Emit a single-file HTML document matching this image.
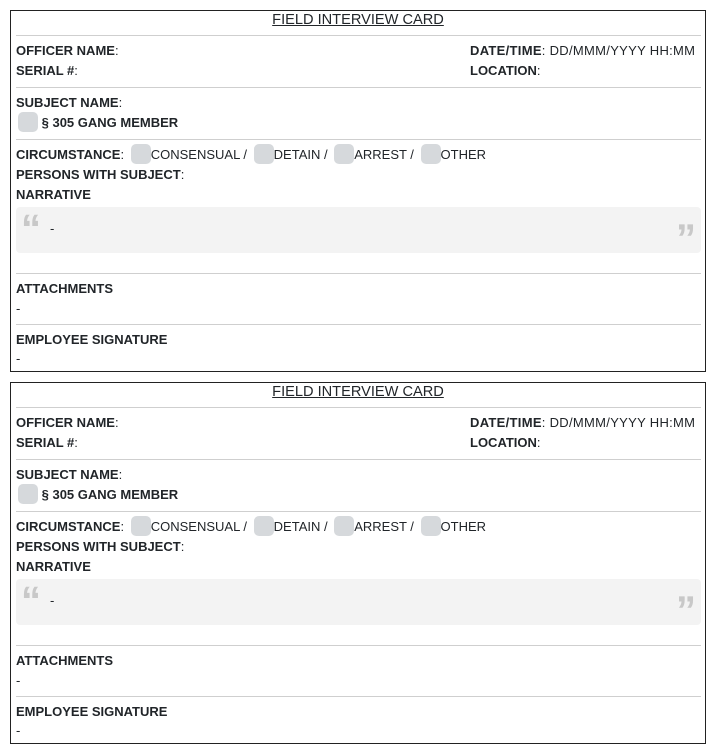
<!DOCTYPE html>
<html><head><style>
*{margin:0;padding:0;box-sizing:border-box}
body{width:716px;height:716px;overflow:hidden;background:#fff;font-family:"Liberation Sans",sans-serif;font-size:13px;color:#212529;position:relative}
.card{position:absolute;left:10px;width:696px;height:362px;border:1px solid #222}
.t{position:absolute;white-space:nowrap;line-height:20px}
b{font-weight:bold}
.hr{position:absolute;left:5px;width:685px;height:1px;background:#cfcfcf}
.cb{display:inline-block;width:20px;height:20px;background:#d6d9dc;border-radius:5px;vertical-align:middle;margin-top:-3px;margin-left:3px}
.q{position:absolute;left:5px;top:196px;width:685px;height:46px;background:#f3f3f3;border-radius:4px}
.qm{position:absolute;font-family:"Liberation Sans",sans-serif;font-weight:bold;font-size:40px;color:#c8c8c8;line-height:40px;letter-spacing:-3px}
.ttl{left:0;width:694px;text-align:center;top:-1px;font-size:14.6px;text-decoration:underline}
</style></head><body>
<div class="card" style="top:10px">
<div class="t ttl">FIELD INTERVIEW CARD</div>
<div class="hr" style="top:24px"></div>
<div class="t" style="left:5px;top:30px"><b>OFFICER NAME</b>:</div>
<div class="t" style="left:5px;top:50px"><b>SERIAL #</b>:</div>
<div class="t" style="left:459px;top:30px;letter-spacing:0.3px"><b>DATE/TIME</b>: DD/MMM/YYYY HH:MM</div>
<div class="t" style="left:459px;top:50px"><b>LOCATION</b>:</div>
<div class="hr" style="top:76px"></div>
<div class="t" style="left:5px;top:82px"><b>SUBJECT NAME</b>:</div>
<div class="t" style="left:4px;top:102px"><span class="cb"></span> <b>§ 305 GANG MEMBER</b></div>
<div class="hr" style="top:128px"></div>
<div class="t" style="left:5px;top:134px"><b>CIRCUMSTANCE</b>: <span class="cb"></span>CONSENSUAL / <span class="cb"></span>DETAIN / <span class="cb"></span>ARREST / <span class="cb"></span>OTHER</div>
<div class="t" style="left:5px;top:154px"><b>PERSONS WITH SUBJECT</b>:</div>
<div class="t" style="left:5px;top:174px"><b>NARRATIVE</b></div>
<div class="q"><span class="qm" style="left:5px;top:2px">“</span><span class="t" style="left:34px;top:12px">-</span><span class="qm" style="right:8px;top:12px">”</span></div>
<div class="hr" style="top:262px"></div>
<div class="t" style="left:5px;top:268px"><b>ATTACHMENTS</b></div>
<div class="t" style="left:5px;top:288px">-</div>
<div class="hr" style="top:313px"></div>
<div class="t" style="left:5px;top:319px"><b>EMPLOYEE SIGNATURE</b></div>
<div class="t" style="left:5px;top:338px">-</div>
</div>
<div class="card" style="top:382px">
<div class="t ttl">FIELD INTERVIEW CARD</div>
<div class="hr" style="top:24px"></div>
<div class="t" style="left:5px;top:30px"><b>OFFICER NAME</b>:</div>
<div class="t" style="left:5px;top:50px"><b>SERIAL #</b>:</div>
<div class="t" style="left:459px;top:30px;letter-spacing:0.3px"><b>DATE/TIME</b>: DD/MMM/YYYY HH:MM</div>
<div class="t" style="left:459px;top:50px"><b>LOCATION</b>:</div>
<div class="hr" style="top:76px"></div>
<div class="t" style="left:5px;top:82px"><b>SUBJECT NAME</b>:</div>
<div class="t" style="left:4px;top:102px"><span class="cb"></span> <b>§ 305 GANG MEMBER</b></div>
<div class="hr" style="top:128px"></div>
<div class="t" style="left:5px;top:134px"><b>CIRCUMSTANCE</b>: <span class="cb"></span>CONSENSUAL / <span class="cb"></span>DETAIN / <span class="cb"></span>ARREST / <span class="cb"></span>OTHER</div>
<div class="t" style="left:5px;top:154px"><b>PERSONS WITH SUBJECT</b>:</div>
<div class="t" style="left:5px;top:174px"><b>NARRATIVE</b></div>
<div class="q"><span class="qm" style="left:5px;top:2px">“</span><span class="t" style="left:34px;top:12px">-</span><span class="qm" style="right:8px;top:12px">”</span></div>
<div class="hr" style="top:262px"></div>
<div class="t" style="left:5px;top:268px"><b>ATTACHMENTS</b></div>
<div class="t" style="left:5px;top:288px">-</div>
<div class="hr" style="top:313px"></div>
<div class="t" style="left:5px;top:319px"><b>EMPLOYEE SIGNATURE</b></div>
<div class="t" style="left:5px;top:338px">-</div>
</div>
</body></html>
